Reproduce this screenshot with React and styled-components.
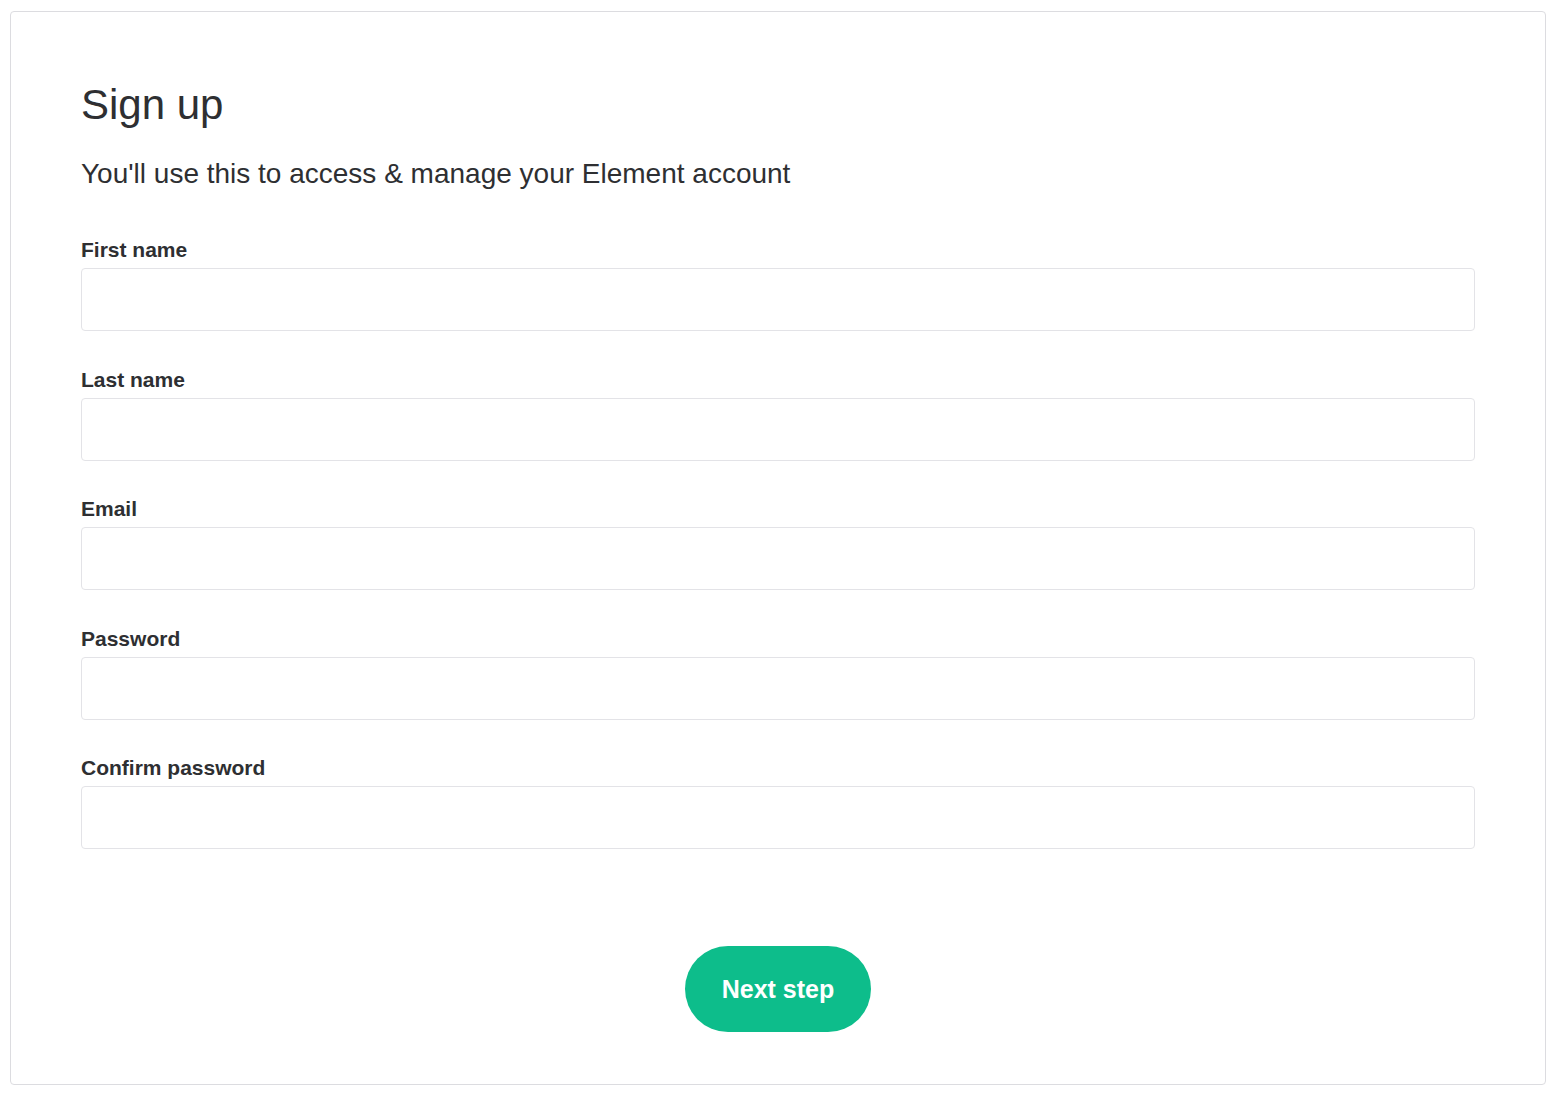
import React from "react";
import styled, { createGlobalStyle } from "styled-components";

const Global = createGlobalStyle`
  html, body { margin: 0; padding: 0; background: #ffffff; }
  body { font-family: "Liberation Sans", Arial, sans-serif; color: #2e2f32; }
  * { box-sizing: border-box; }
`;

const Page = styled.div`
  padding: 11px 17px 18px 10px;
`;

const Card = styled.form`
  width: 1536px;
  border: 1px solid #dcdce0;
  border-radius: 4px;
  padding: 69px 70px 52px 70px;
  display: flex;
  flex-direction: column;
`;

const Title = styled.h1`
  margin: 0;
  font-size: 42px;
  line-height: 48px;
  font-weight: 400;
  color: #2e2f32;
`;

const Subtitle = styled.p`
  margin: 29px 0 0;
  font-size: 28px;
  line-height: 32px;
  color: #2e2f32;
`;

const Fields = styled.div`
  margin-top: 48px;
  display: flex;
  flex-direction: column;
  gap: 36.5px;
`;

const Field = styled.label`
  display: flex;
  flex-direction: column;
  gap: 6px;
`;

const LabelText = styled.span`
  font-size: 21px;
  line-height: 24px;
  font-weight: 700;
  color: #2e2f32;
`;

const Input = styled.input`
  height: 63px;
  width: 100%;
  border: 1px solid #e3e3e7;
  border-radius: 4px;
  padding: 0 16px;
  font-size: 20px;
  font-family: inherit;
  outline: none;
  background: #fff;
`;

const Actions = styled.div`
  margin-top: 97px;
  display: flex;
  justify-content: center;
`;

const Button = styled.button`
  width: 186px;
  height: 86px;
  border: none;
  border-radius: 43px;
  background: #0dbd8b;
  color: #ffffff;
  font-family: "Liberation Sans", Arial, sans-serif;
  font-size: 25px;
  font-weight: 700;
  cursor: pointer;
`;

const fields = [
  { label: "First name", type: "text" },
  { label: "Last name", type: "text" },
  { label: "Email", type: "email" },
  { label: "Password", type: "password" },
  { label: "Confirm password", type: "password" },
];

export default function App() {
  return (
    <>
      <Global />
      <Page>
        <Card onSubmit={(e) => e.preventDefault()}>
          <Title>Sign up</Title>
          <Subtitle>You'll use this to access &amp; manage your Element account</Subtitle>
          <Fields>
            {fields.map((f) => (
              <Field key={f.label}>
                <LabelText>{f.label}</LabelText>
                <Input type={f.type} />
              </Field>
            ))}
          </Fields>
          <Actions>
            <Button type="submit">Next step</Button>
          </Actions>
        </Card>
      </Page>
    </>
  );
}
